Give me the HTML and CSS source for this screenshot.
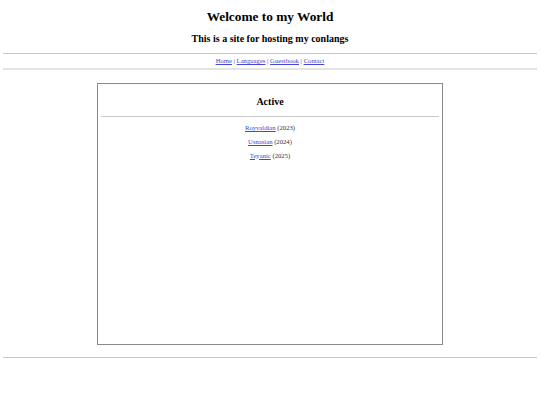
FILE: index.html
```html
<!DOCTYPE html>
<html lang="en">
<head>
<meta charset="utf-8">
<title>Welcome to my World</title>
<link rel="stylesheet" href="styles.css">
</head>
<body>
  <header class="site-header">
    <h1 class="site-title">Welcome to my World</h1>
    <h2 class="site-subtitle">This is a site for hosting my conlangs</h2>
  </header>
  <hr class="rule">
  <nav class="site-nav">
    <a href="#">Home</a> | <a href="#">Languages</a> | <a href="#">Guestbook</a> | <a href="#">Contact</a>
  </nav>
  <hr class="rule rule-soft">
  <main class="panel">
    <h2 class="panel-title">Active</h2>
    <hr class="rule">
    <ul class="lang-list">
      <li><a href="#">Royvaldian</a> (2023)</li>
      <li><a href="#">Usnasian</a> (2024)</li>
      <li><a href="#">Teyanic</a> (2025)</li>
    </ul>
  </main>
  <hr class="rule">
</body>
</html>
```

FILE: styles.css
```css
html {
  background: #fff;
}

body {
  margin: 0 3.33px 3.33px;
  padding-top: 0.1px;
  font-family: "Liberation Serif", "Times New Roman", serif;
  color: #000;
  text-align: center;
}

.site-title {
  font-size: 13.33px;
  font-weight: bold;
  margin: 8.7px 0 8.93px;
  line-height: 15.3px;
}

.site-subtitle {
  font-size: 10px;
  font-weight: bold;
  margin: 8.3px 0;
  line-height: 11.5px;
}

.rule {
  border: 0;
  border-top: 1px solid #c9c9c9;
  height: 0;
  margin: 3.33px 0;
}

.rule-soft {
  border-top: 2px solid #e4e4e4;
  margin-top: 2.9px;
}

.site-nav {
  font-size: 6.67px;
  line-height: 7.67px;
  color: #333;
}

a {
  color: #4646d8;
}

.panel {
  box-sizing: border-box;
  width: 346.67px;
  height: 262.5px;
  margin: 13px auto 12px;
  border: 1px solid #8a8a8a;
  padding: 4px 3.33px;
}

.panel-title {
  font-size: 10px;
  font-weight: bold;
  margin: 8.33px 0;
  line-height: 11.5px;
}

.lang-list {
  list-style: none;
  margin: 4.5px 0;
  padding: 0;
  font-size: 6.67px;
  line-height: 13.6px;
  color: #333;
}
```
